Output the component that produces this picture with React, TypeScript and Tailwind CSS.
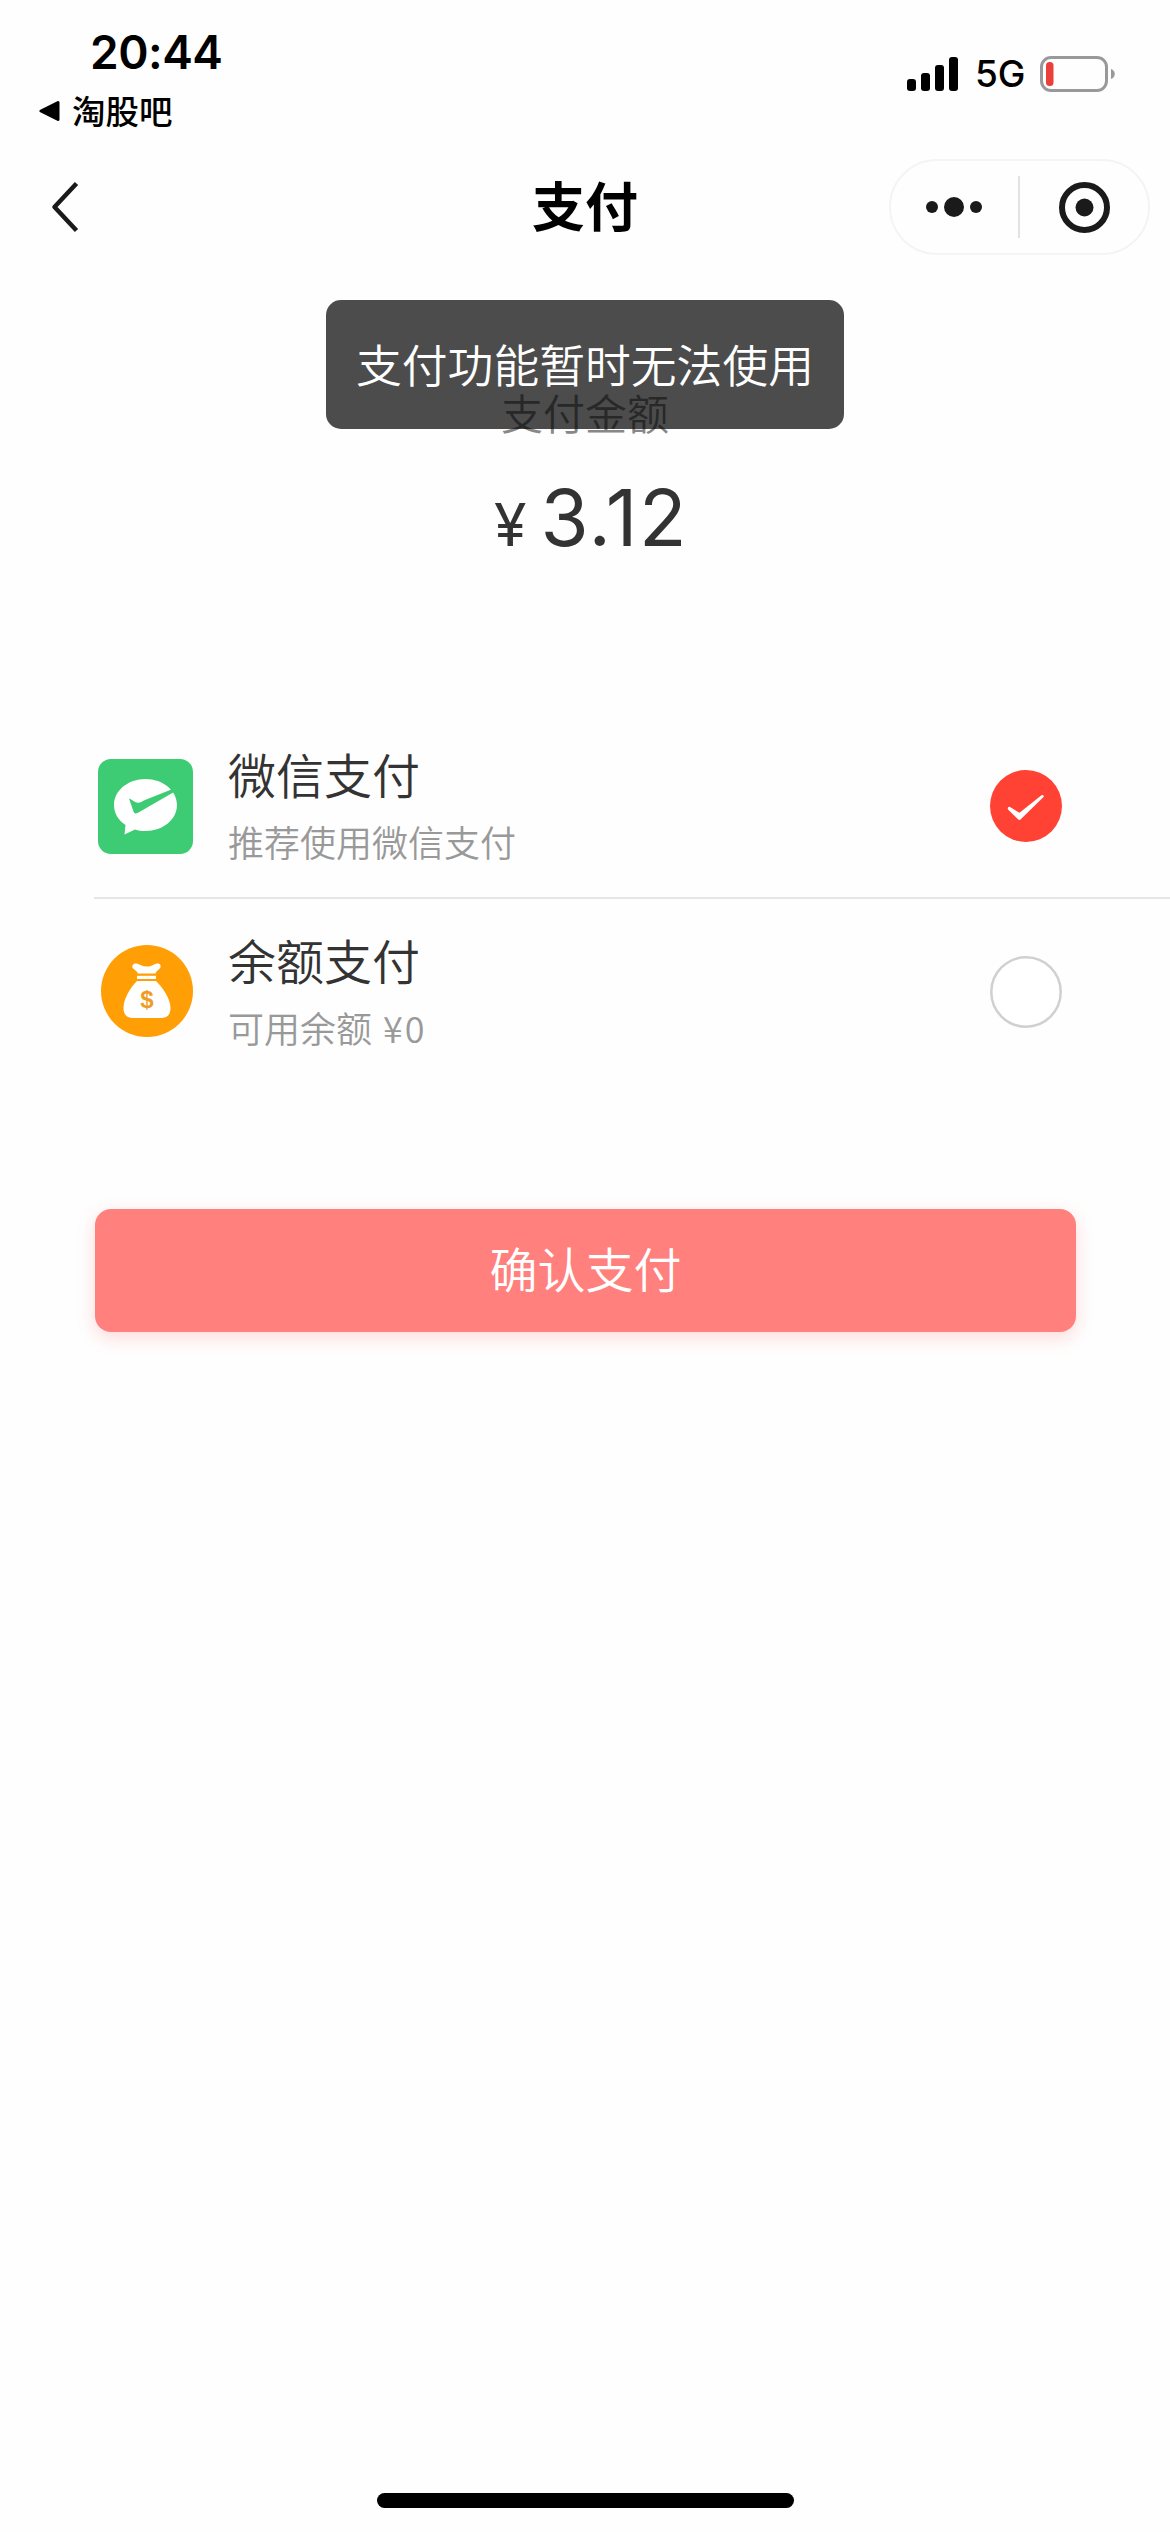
import { useState } from 'react';
import type { ReactNode } from 'react';

const WechatPayIcon = () => (
  <svg className="mt-px ml-1 h-[95px] w-[95px]" viewBox="0 0 95 95">
    <rect width="95" height="95" rx="13" fill="#3dcb73" />
    <path
      d="M47.500 20C30 20 16 31.500 16 46C16 54 20 61 27.500 66L26.500 75.500L37 70.500C40 71.500 44 72 47.500 72C65 72 79 60.500 79 46C79 31.500 65 20 47.500 20Z"
      fill="#fff"
    />
    <path
      d="M31 39.500C33 40 37 43.500 39.500 43.800C42 44 44 42.500 47 41L74 30.200L76 33L40 53.800C37.500 55.200 36.500 54.500 35.500 52.500Z"
      fill="#3dcb73"
    />
  </svg>
);

const BalanceIcon = () => (
  <svg className="mb-[2px] ml-[7px] h-[92px] w-[92px]" viewBox="0 0 92 92">
    <circle cx="46" cy="46" r="46" fill="#ff9f05" />
    <path
      d="M31.500 20.500C33 17.500 36.500 18.500 39.500 20C43.500 22 48 22 52 20C55 18.500 58.500 17.500 59.500 20.500C60.500 24 56 24.500 54.500 28.500H37C35.500 24.500 30 24 31.500 20.500Z"
      fill="#fff"
    />
    <path d="M36 30.800H55V34H36Z" fill="#fff" />
    <path
      d="M36 36H55C61 42 69.500 53 69.500 63C69.500 70 66 73 59 73H33C26 73 22.500 70 22.500 63C22.500 53 30 42 36 36Z"
      fill="#fff"
    />
    <text x="46" y="62.500" textAnchor="middle" fontSize="24" fontWeight="700" fontFamily="Liberation Sans, sans-serif" fill="#ee9c26">
      $
    </text>
  </svg>
);

const SignalIcon = () => (
  <svg className="h-[34px] w-[51px]" viewBox="0 0 51 34">
    <rect x="0" y="22" width="9" height="12" rx="3" />
    <rect x="14" y="16" width="9" height="18" rx="3" />
    <rect x="28" y="8" width="9" height="26" rx="3" />
    <rect x="42" y="0" width="9" height="34" rx="3" />
  </svg>
);

const BatteryIcon = () => (
  <svg className="h-9 w-[76px]" viewBox="0 0 76 36">
    <rect x="1.500" y="1.500" width="65" height="33" rx="9.500" fill="none" stroke="#999" strokeWidth="3" />
    <rect x="6" y="6" width="7.500" height="24" rx="3.500" fill="#e9403c" />
    <path d="M71 13C76 14.500 76 21.500 71 23Z" fill="#999" />
  </svg>
);

const StatusBar = () => (
  <header className="flex h-[144px] justify-between pl-[39px] pr-[54px]">
    <div className="pt-[22px] text-black">
      <div className="pl-[51px] font-[Inter] text-[46px] leading-[60px] font-semibold tracking-[-0.5px]">20:44</div>
      <div className="flex h-[58px] items-center">
        <svg className="h-[22px] w-[21px]" viewBox="0 0 21 22">
          <path d="M2 11L19 2.500V19.500Z" stroke="#000" strokeWidth="3" strokeLinejoin="round" />
        </svg>
        <span className="ml-[12px] pb-[3px] text-[33.500px] leading-[55px] font-medium">淘股吧</span>
      </div>
    </div>
    <div className="mt-[56px] flex h-9 items-center">
      <SignalIcon />
      <span className="ml-[17px] w-[65px] font-[Inter] text-[37px] leading-9 font-medium">5G</span>
      <BatteryIcon />
    </div>
  </header>
);

const NavBar = () => (
  <nav className="grid h-[126px] grid-cols-[1fr_200px_1fr] items-center">
    <svg className="ml-[50px] h-[52px] w-[30px]" viewBox="0 0 30 52">
      <path d="M26.500 2.500L4.500 26L26.500 49.500" fill="none" stroke="#1a1a1a" strokeWidth="4.500" strokeLinejoin="round" />
    </svg>
    <h1 className="pb-[6px] text-center text-[53px] leading-[70px] font-bold text-black">支付</h1>
    <div className="mr-[20px] flex h-[96px] w-[261px] items-center justify-self-end rounded-full border-2 border-[#f4f4f4]">
      <svg className="ml-[35px] h-5 w-[56px]" viewBox="0 0 56 20" fill="#1a1a1a">
        <circle cx="6" cy="10" r="6" />
        <circle cx="28" cy="10" r="10" />
        <circle cx="50" cy="10" r="6" />
      </svg>
      <div className="ml-[36px] h-[62px] w-[2px] bg-[#e2e2e2]" />
      <svg className="ml-[39px] h-[51px] w-[51px]" viewBox="0 0 51 51" fill="#1a1a1a">
        <circle cx="25.500" cy="25.500" r="22.500" fill="none" stroke="#1a1a1a" strokeWidth="6" />
        <circle cx="25.500" cy="25.500" r="9" />
      </svg>
    </div>
  </nav>
);

const Radio = ({ checked }: { checked: boolean }) => (
  <svg className="h-[72px] w-[72px]" viewBox="0 0 72 72">
    {checked ? (
      <>
        <circle cx="36" cy="36" r="36" fill="#ff4234" />
        <path d="M18 37.500Q19 36.300 20.500 37.300L29.500 42.800L51.500 25.300Q53 24.300 53.700 25.800Q54 26.600 53 27.600L31 49Q29.500 50.800 28 49.200L18.500 40Q17.300 38.700 18 37.500Z" fill="#fff" />
      </>
    ) : (
      <circle cx="36" cy="36" r="34.700" fill="#fff" stroke="#d0d0d0" strokeWidth="2.500" />
    )}
  </svg>
);

interface MethodRowProps {
  icon: ReactNode;
  title: string;
  desc: ReactNode;
  checked: boolean;
  onSelect: () => void;
}

const MethodRow = ({ icon, title, desc, checked, onSelect }: MethodRowProps) => (
  <div className="flex h-[185px] items-center pr-[108px]" onClick={onSelect}>
    <div className="w-[134px]">{icon}</div>
    <div className="flex-1 pb-px">
      <div className="text-[48px] leading-[69px] font-[350] text-[#333]">{title}</div>
      <div className="mt-[3px] text-[36px] leading-[60px] font-[350] text-[#999]">{desc}</div>
    </div>
    <Radio checked={checked} />
  </div>
);

const methods = [
  { id: 'wechat', title: '微信支付', desc: '推荐使用微信支付', icon: <WechatPayIcon /> },
  {
    id: 'balance',
    title: '余额支付',
    desc: <>可用余额 <span className="ml-[3px] tracking-[2px]">¥0</span></>,
    icon: <BalanceIcon />,
  },
];

const App = () => {
  const [selected, setSelected] = useState('wechat');

  return (
    <div className="relative flex h-[2532px] w-[1170px] flex-col bg-[#fefefe] font-['Noto_Sans_CJK_SC',sans-serif]">
      <StatusBar />
      <NavBar />

      {/* Amount */}
      <section className="flex h-[444px] flex-col items-center pt-[112px]">
        <p className="text-[42px] leading-[60px] font-[350] text-[#888]">支付金额</p>
        <div className="mt-[31px] flex items-baseline pl-[12px] font-[Inter] text-[#333]">
          <span className="text-[59px] leading-[90px]">¥</span>
          <span className="ml-[14px] text-[78px] leading-[90px] tracking-[1.5px]">3.12</span>
        </div>
      </section>

      {/* Payment methods */}
      <section className="ml-[94px] divide-y-2 divide-[#e6e6e6]">
        {methods.map((m) => (
          <MethodRow
            key={m.id}
            icon={m.icon}
            title={m.title}
            desc={m.desc}
            checked={selected === m.id}
            onSelect={() => setSelected(m.id)}
          />
        ))}
      </section>

      <button className="mr-[94px] ml-[95px] mt-[125px] h-[123px] rounded-2xl bg-[#ff807d] pb-[7px] text-[48px] font-[350] text-white shadow-[0_6px_18px_rgba(255,90,90,0.22)]">
        确认支付
      </button>

      <div className="mx-auto mt-auto mb-6 h-[15px] w-[417px] rounded-full bg-black" />

      {/* Toast */}
      <div className="absolute top-[300px] left-[326px] flex h-[129px] w-[518px] items-center justify-center rounded-[15px] bg-black/70 pb-[3px] text-[45.800px] font-[350] text-white">
        支付功能暂时无法使用
      </div>
    </div>
  );
};

export default App;
